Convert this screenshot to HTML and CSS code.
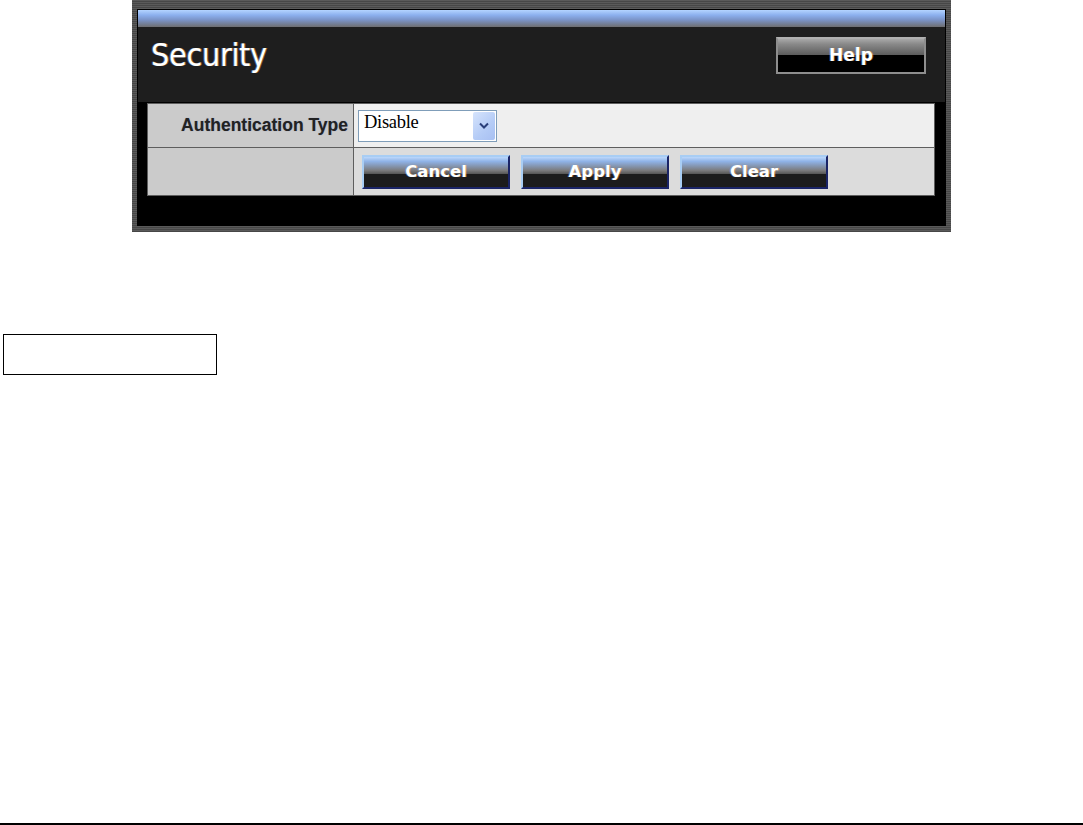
FILE: index.html
```html
<!DOCTYPE html>
<html>
<head>
<meta charset="utf-8">
<link rel="stylesheet" href="styles.css">
</head>
<body>
<div class="shot">
  <div class="frame">
    <div class="bluebar"></div>
    <div class="header">
      <h1 class="title">Security</h1>
      <button class="help-btn">Help</button>
    </div>
    <div class="body">
      <table class="form">
        <tr class="row1">
          <td class="label">Authentication Type</td>
          <td class="value">
            <div class="select">
              <span class="select-text">Disable</span>
              <span class="select-arrow">
                <svg width="10" height="7" viewBox="0 0 10 7"><polyline points="1,1.5 5,5.5 9,1.5" fill="none" stroke="#2a3f7a" stroke-width="2"/></svg>
              </span>
            </div>
          </td>
        </tr>
        <tr class="row2">
          <td class="label"></td>
          <td class="value">
            <div class="btns">
              <button class="btn">Cancel</button>
              <button class="btn">Apply</button>
              <button class="btn">Clear</button>
            </div>
          </td>
        </tr>
      </table>
    </div>
  </div>
</div>
<div class="caption-box"></div>
<div class="rule"></div>
</body>
</html>
```

FILE: styles.css
```css
html, body {
  margin: 0;
  padding: 0;
  background: #fff;
}
.shot {
  margin-left: 132px;
  width: 809px;
  padding: 9px 5px 6px 5px;
  background: repeating-linear-gradient(180deg, #5a5a5a 0, #5a5a5a 1px, #474747 1px, #474747 2px);
}
.frame {
  border: 1px solid #000;
  background: #000;
}
.bluebar {
  height: 17px;
  background: linear-gradient(180deg, #b4d4ff 0%, #8cb0ee 30%, #7a92c4 60%, #6e6e70 100%);
}
.header {
  height: 75px;
  background: #1e1e1e;
  display: flex;
  align-items: flex-start;
  justify-content: space-between;
  padding: 0 19px 0 13px;
}
.title {
  margin: 9px 0 0 0;
  font-family: "DejaVu Sans Condensed", "DejaVu Sans", sans-serif;
  font-weight: normal;
  font-size: 32px;
  color: #fff;
  letter-spacing: -0.3px;
  text-shadow: 1px 0 0 rgba(255, 170, 60, 0.5), -1px 0 0 rgba(120, 170, 255, 0.5);
}
.help-btn {
  margin-top: 10px;
  width: 150px;
  height: 37px;
  border: 2px solid #8e8e8e;
  border-top-color: #b0b0b0;
  background: linear-gradient(180deg, #a8a8a8 0%, #8a8a8a 15%, #5a5a5a 50%, #000 50%, #000 100%);
  color: #fff;
  font-family: "DejaVu Sans", Verdana, sans-serif;
  font-weight: bold;
  font-size: 17px;
  padding: 0 0 2px 0;
  text-shadow: 1px 0 0 rgba(255, 170, 60, 0.45), -1px 0 0 rgba(120, 170, 255, 0.45);
}
.body {
  padding: 1px 10px 29px 9px;
}
.form {
  width: 100%;
  border-collapse: collapse;
  border: 1px solid #666;
}
.form td {
  border: 1px solid #5e5e5e;
  padding: 0;
}
.label {
  width: 200px;
  background: #cbcbcb;
  text-align: right;
  padding-right: 5px !important;
  font-family: "Liberation Sans", Arial, sans-serif;
  font-weight: bold;
  font-size: 17.5px;
  color: #222;
  text-shadow: 0 0 1px rgba(60, 80, 160, 0.5);
}
.row1 td { height: 43px; }
.row2 td { height: 47px; }
.row1 .value { background: #efefef; padding-left: 4px; }
.row2 .value { background: #dcdcdc; padding-left: 8px; }
.select {
  width: 139px;
  height: 32px;
  border: 1px solid #7f9db9;
  background: #fff;
  display: flex;
  align-items: center;
  justify-content: space-between;
  box-sizing: border-box;
  padding: 1px;
}
.select-text {
  font-family: "Liberation Serif", "Times New Roman", serif;
  font-size: 18.5px;
  letter-spacing: -0.3px;
  color: #000;
  padding-left: 4px;
  margin-top: -6px;
}
.select-arrow {
  width: 22px;
  height: 28px;
  background: linear-gradient(135deg, #d6e4fc 0%, #b4cbf6 60%, #a8c0f2 100%);
  border-radius: 2px;
  display: flex;
  align-items: center;
  justify-content: center;
}
.btns {
  display: flex;
  gap: 11px;
}
.btn {
  width: 148px;
  height: 34px;
  padding: 0 0 1px 0;
  border: 2px solid;
  border-color: #a8cdf4 #1a2466 #1a2466 #a8cdf4;
  background: linear-gradient(180deg, #bcd8fc 0%, #8fb2e6 15%, #7a7a7c 45%, #5a5a5a 55%, #1c1c1c 56%, #1c1c1c 100%);
  color: #fff;
  font-family: "DejaVu Sans", Verdana, sans-serif;
  font-weight: bold;
  font-size: 16.5px;
  text-shadow: 1px 0 0 rgba(255, 170, 60, 0.45), -1px 0 0 rgba(120, 170, 255, 0.45);
}
.caption-box {
  margin: 102px 0 0 3px;
  width: 212px;
  height: 39px;
  border: 1px solid #000;
}
.rule {
  margin-top: 448px;
  height: 2px;
  background: #000;
}
```
